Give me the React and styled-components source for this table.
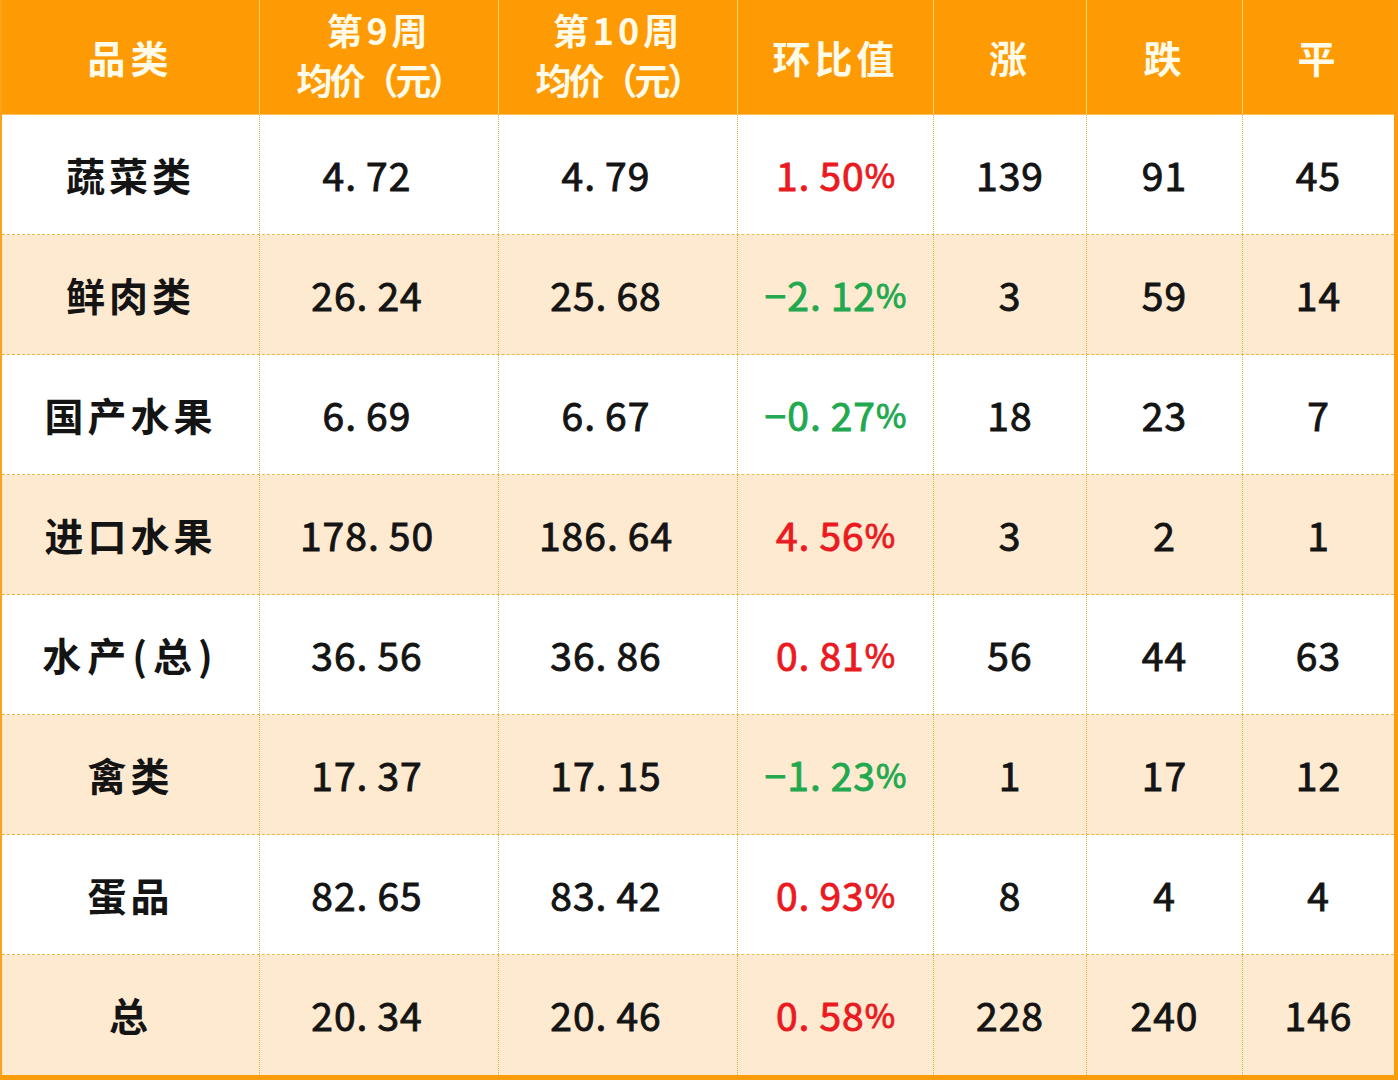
import styled, { createGlobalStyle } from 'styled-components';

const GlobalStyle = createGlobalStyle`
  html, body {
    margin: 0;
    padding: 0;
    background: #ffffff;
  }
  body {
    font-family: "Noto Sans CJK SC", "Noto Sans", sans-serif;
  }
`;

const COLS = '258px 239px 239px 196px 153px 156px 151px';

let Table = styled.div`
  width: 1398px;
  height: 1080px;
  box-sizing: border-box;
  border-left: 2px solid #f9a21a;
  border-right: 4px solid #fb9c0c;
  border-bottom: 5px solid #fb9c0c;
  display: flex;
  flex-direction: column;
  overflow: hidden;
`;

let HeadRow = styled.div`
  display: grid;
  grid-template-columns: ${COLS};
  height: 115px;
  background: #fd9a04;
  border-bottom: 1px solid #fbc255;
  box-sizing: border-box;
`;

let HeadCell = styled.div`
  display: flex;
  flex-direction: column;
  align-items: center;
  justify-content: center;
  color: #fffbe8;
  font-weight: 700;
  font-size: ${(props) => (props.$two ? '36px' : '38px')};
  line-height: 52px;
  letter-spacing: ${(props) => props.$ls || '4px'};
  border-right: ${(props) => (props.$last ? 'none' : '1.5px solid #fcd56b')};
  padding-bottom: ${(props) => (props.$two ? '6px' : '0')};
  box-sizing: border-box;
`;

let HeadLine = styled.span`
  display: block;
  height: 50px;
  line-height: 50px;
  letter-spacing: ${(props) => props.$ls};
`;

let Row = styled.div`
  display: grid;
  grid-template-columns: ${COLS};
  height: 120px;
  background: ${(props) => (props.$shade ? '#feead0' : '#ffffff')};
  border-bottom: ${(props) => (props.$last ? 'none' : '1.5px dashed #e9b943')};
  box-sizing: border-box;
`;

let Cell = styled.div`
  display: flex;
  align-items: center;
  justify-content: center;
  font-size: 39px;
  font-weight: ${(props) => (props.$name ? 700 : 400)};
  -webkit-text-stroke: ${(props) => (props.$name ? '0' : '0.9px currentColor')};
  letter-spacing: ${(props) => (props.$name ? props.$ls || '4px' : '1px')};
  color: ${(props) =>
    props.$tone === 'up' ? '#ea1a22' : props.$tone === 'down' ? '#22a84f' : '#141414'};
  border-right: ${(props) => (props.$last ? 'none' : '1.5px dotted #e0b040')};
  box-sizing: border-box;
  padding-bottom: 2px;
  padding-right: ${(props) => (props.$shift ? '24px' : '0')};
`;

let Dot = styled.span`
  margin-right: 9px;
`;

let Pct = styled.span`
  font-size: 33px;
  letter-spacing: 0;
`;

function Num(props) {
  let v = props.v;
  let pct = v.endsWith('%');
  if (pct) v = v.slice(0, -1);
  let parts = v.split('.');
  return (
    <>
      {parts[0]}
      <Dot>.</Dot>
      {parts[1]}
      {pct ? <Pct>%</Pct> : null}
    </>
  );
}

let data = [
  ['蔬菜类', '4.72', '4.79', '1.50%', '139', '91', '45'],
  ['鲜肉类', '26.24', '25.68', '−2.12%', '3', '59', '14'],
  ['国产水果', '6.69', '6.67', '−0.27%', '18', '23', '7'],
  ['进口水果', '178.50', '186.64', '4.56%', '3', '2', '1'],
  ['水产(总)', '36.56', '36.86', '0.81%', '56', '44', '63'],
  ['禽类', '17.37', '17.15', '−1.23%', '1', '17', '12'],
  ['蛋品', '82.65', '83.42', '0.93%', '8', '4', '4'],
  ['总', '20.34', '20.46', '0.58%', '228', '240', '146'],
];

function App() {
  return (
    <>
      <GlobalStyle />
      <Table>
        <HeadRow>
          <HeadCell $ls="5px">品类</HeadCell>
          <HeadCell $two>
            <HeadLine $ls="4px">第9周</HeadLine>
            <HeadLine $ls="-3px">均价（元）</HeadLine>
          </HeadCell>
          <HeadCell $two>
            <HeadLine $ls="4px">第10周</HeadLine>
            <HeadLine $ls="-3px">均价（元）</HeadLine>
          </HeadCell>
          <HeadCell>环比值</HeadCell>
          <HeadCell>涨</HeadCell>
          <HeadCell>跌</HeadCell>
          <HeadCell $last>平</HeadCell>
        </HeadRow>
        {data.map((r, i) => {
          let tone = r[3].startsWith('−') ? 'down' : 'up';
          return (
            <Row key={r[0]} $shade={i % 2 === 1} $last={i === data.length - 1}>
              <Cell $name $ls={r[0].includes('(') ? '6px' : '4px'}>
                {r[0]}
              </Cell>
              <Cell $shift>
                <Num v={r[1]} />
              </Cell>
              <Cell $shift>
                <Num v={r[2]} />
              </Cell>
              <Cell $tone={tone}>
                <Num v={r[3]} />
              </Cell>
              <Cell>{r[4]}</Cell>
              <Cell>{r[5]}</Cell>
              <Cell $last>{r[6]}</Cell>
            </Row>
          );
        })}
      </Table>
    </>
  );
}

export default App;
